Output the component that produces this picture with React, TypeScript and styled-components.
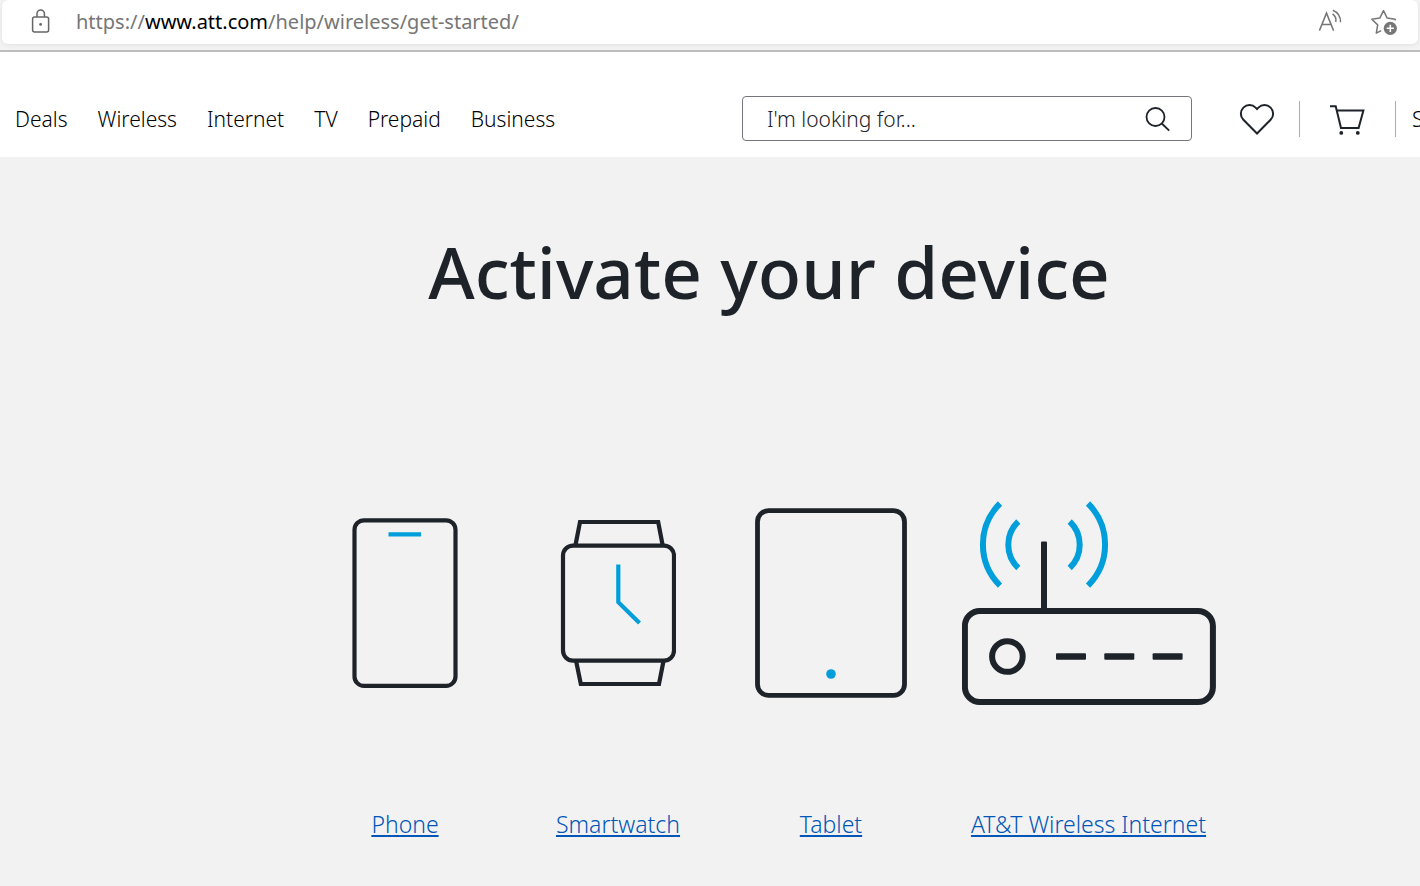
import React from "react";
import styled, { createGlobalStyle } from "styled-components";

const INK = "#1d2329";
const BLUE = "#009fdb";
const LINK = "#0057b8";

const GlobalStyle = createGlobalStyle`
  *, *::before, *::after { box-sizing: border-box; }
  body {
    margin: 0;
    background: #f2f2f2;
    color: ${INK};
    font-family: "Noto Sans", "Open Sans", sans-serif;
  }
`;

const Page = styled.div`
  display: flex;
  flex-direction: column;
  min-height: 100vh;
  overflow-x: hidden;
`;

const BrowserBar = styled.div`
  height: 52px;
  padding: 0 2px;
  background: #f3f3f3;
  border-bottom: 2px solid #bdbdbd;
`;

const AddressBar = styled.div`
  display: flex;
  align-items: center;
  height: 44px;
  padding: 0 20px 0 28px;
  border-radius: 6px;
  background: #fff;
  box-shadow: 0 1px 4px rgba(0, 0, 0, 0.08);
`;

const Url = styled.div`
  flex: 1;
  margin-left: 24px;
  color: #767676;
  font-size: 20px;
  line-height: 28px;
  white-space: nowrap;
`;

const Host = styled.span`
  color: #000;
`;

const IconButton = styled.button`
  display: flex;
  flex: none;
  padding: 0;
  border: 0;
  background: none;
  color: inherit;
  cursor: pointer;
`;

const BarActions = styled.div`
  display: flex;
  gap: 26px;
`;

const SiteHeader = styled.header`
  display: flex;
  align-items: center;
  height: 105px;
  padding: 28px 0 0 15px;
  background: #fff;
`;

const NavList = styled.nav`
  display: flex;
  gap: 30px;
`;

const NavLink = styled.a`
  color: #000;
  font-size: 21px;
  font-weight: 300;
  line-height: 28px;
  text-decoration: none;
  white-space: nowrap;
`;

const SearchForm = styled.form`
  display: flex;
  align-items: center;
  width: 450px;
  height: 45px;
  margin-left: auto;
  padding: 0 19px 0 24px;
  border: 1px solid #74767b;
  border-radius: 4px;
`;

const SearchInput = styled.input`
  flex: 1;
  min-width: 0;
  padding: 0;
  border: 0;
  outline: 0;
  background: none;
  color: ${INK};
  font: 300 21px/28px "Noto Sans", "Open Sans", sans-serif;

  &::placeholder {
    color: ${INK};
    opacity: 1;
  }
`;

const Tools = styled.div`
  display: flex;
  align-items: center;
  flex: none;
  padding-left: 47px;
`;

const Divider = styled.span`
  width: 1px;
  height: 36px;
  margin: 0 30px 0 24px;
  background: #a9abae;
`;

const AccountLink = styled(NavLink)`
  width: 25px;
  height: 36px;
  margin-left: 29px;
  padding-left: 16px;
  border-left: 1px solid #a9abae;
  line-height: 36px;
  overflow: hidden;
`;

const Main = styled.main`
  display: flex;
  flex: 1;
  flex-direction: column;
  align-items: center;
  padding: 66px 0 32px 118px;
`;

const Title = styled.h1`
  margin: 0;
  font-size: 71px;
  font-weight: 500;
  line-height: 98px;
`;

const DeviceGrid = styled.ul`
  display: grid;
  grid-template-columns: 213fr 213fr 213fr 302fr;
  width: 100%;
  max-width: 941px;
  margin: 0;
  padding: 180px 0 0;
  list-style: none;
`;

const Device = styled.li`
  display: flex;
  flex-direction: column;
  align-items: center;
`;

const Figure = styled.div`
  display: flex;
  align-items: center;
  justify-content: center;
  height: 204px;
  margin-bottom: 103px;
`;

const DeviceLink = styled.a`
  color: ${LINK};
  font-size: 23px;
  font-weight: 300;
  line-height: 32px;
  text-decoration-line: underline;
  text-decoration-thickness: 2px;
  text-underline-offset: 2px;
  white-space: nowrap;
`;

const LockIcon = () => (
  <svg width="22" height="26" viewBox="0 0 22 26" fill="none" stroke="#666" strokeWidth="1.5" aria-hidden="true">
    <rect x="2.6" y="7.9" width="16" height="15" rx="2" />
    <path d="M7 7.7V4.6a3.7 3.7 0 0 1 7.4 0v3.1" />
    <circle cx="10.6" cy="15.4" r="1.4" fill="#666" stroke="none" />
  </svg>
);

const ReadAloudIcon = () => (
  <svg width="28" height="28" viewBox="0 0 28 28" fill="none" stroke="#767676" strokeWidth="1.5" aria-hidden="true">
    <path d="M3.4 22.6 10.5 5.1 17.6 22.6M6 16.6h9" />
    <path d="M16.5 5.9a8 8 0 0 1 3.3 8.1M16.8 2.2a12 12 0 0 1 7.7 12" />
  </svg>
);

const StarIcon = () => (
  <svg width="28" height="28" viewBox="0 0 28 28" fill="none" stroke="#767676" strokeWidth="1.5" strokeLinejoin="round" aria-hidden="true">
    <path d="M25.2 12.4v-1.2l-8-1.1-3.7-7.5-3.7 7.5-8 1.1 5.9 5.7-1.4 8.2 4.9-2.5" />
    <circle cx="20.3" cy="20.3" r="6.6" fill="#767676" stroke="none" />
    <path d="M20.3 16.7v7.2M16.7 20.3h7.2" stroke="#fff" strokeWidth="1.6" />
  </svg>
);

const SearchIcon = () => (
  <svg width="28" height="28" viewBox="0 0 28 28" fill="none" stroke={INK} strokeWidth="1.8" aria-hidden="true">
    <circle cx="11.5" cy="12" r="9" />
    <path d="m17.8 18.5 7.4 7.2" />
  </svg>
);

const HeartIcon = () => (
  <svg width="36" height="36" viewBox="0 0 36 36" fill="none" stroke={INK} strokeWidth="2" aria-hidden="true">
    <path d="M18 32.5 4.4 18.8a8.6 8.6 0 0 1 0-12.2 8.6 8.6 0 0 1 12.2 0L18 8l1.4-1.4a8.6 8.6 0 0 1 12.2 0 8.6 8.6 0 0 1 0 12.2Z" />
  </svg>
);

const CartIcon = () => (
  <svg width="36" height="36" viewBox="0 0 36 36" fill="none" stroke={INK} strokeWidth="2" aria-hidden="true">
    <path d="M0 5.2h5.7L11 26.9h17.6l4.8-17.4H6.8" />
    <circle cx="11.3" cy="31.9" r="1.9" fill={INK} stroke="none" />
    <circle cx="27.8" cy="31.9" r="1.9" fill={INK} stroke="none" />
  </svg>
);

const PhoneArt = () => (
  <svg width="106" height="170" viewBox="0 0 106 170" fill="none" stroke={INK} strokeWidth="4.2" aria-hidden="true">
    <rect x="2.5" y="2.3" width="101" height="165.6" rx="9.5" />
    <path d="M36.5 16.3h32.5" stroke={BLUE} />
  </svg>
);

const WatchArt = () => (
  <svg width="116" height="168" viewBox="0 0 116 168" fill="none" stroke={INK} strokeWidth="4.2" aria-hidden="true">
    <rect x="3" y="26.6" width="111" height="115" rx="10" />
    <path d="M15.5 26 20 3h78.2l4.4 23M16 141.5l4.8 23.5h78.2l4.6-23.5" />
    <path d="M58.3 45.6v37.6l21.2 20.7" stroke={BLUE} />
  </svg>
);

const TabletArt = () => (
  <svg width="152" height="190" viewBox="0 0 152 190" fill="none" stroke={INK} strokeWidth="4.8" aria-hidden="true">
    <rect x="2.5" y="2.7" width="147" height="184.6" rx="11" />
    <circle cx="76" cy="166" r="4.8" fill={BLUE} stroke="none" />
  </svg>
);

const RouterArt = () => (
  <svg width="254" height="204" viewBox="0 0 254 204" fill="none" stroke={INK} strokeWidth="6" aria-hidden="true">
    <rect x="2.9" y="110" width="248" height="91" rx="15" />
    <circle cx="45.4" cy="155.5" r="15.3" />
    <path d="M82 43.5V110" strokeLinejoin="round" />
    <rect x="79" y="40.5" width="6" height="10" rx="1" fill={INK} stroke="none" />
    <g fill={INK} stroke="none">
      <rect x="94" y="152.3" width="30" height="6.4" rx="1" />
      <rect x="142.3" y="152.3" width="30" height="6.4" rx="1" />
      <rect x="190.6" y="152.3" width="30" height="6.4" rx="1" />
    </g>
    <path
      d="M38 2.5a58 58 0 0 0 0 82.2M56.3 20.5a32 32 0 0 0 0 46.5M107.7 20.5a32 32 0 0 1 0 46.5M126 2.5a58 58 0 0 1 0 82.2"
      stroke={BLUE}
    />
  </svg>
);

const navItems = ["Deals", "Wireless", "Internet", "TV", "Prepaid", "Business"];

const devices = [
  { label: "Phone", Art: PhoneArt },
  { label: "Smartwatch", Art: WatchArt },
  { label: "Tablet", Art: TabletArt },
  { label: "AT&T Wireless Internet", Art: RouterArt },
];

export default function App() {
  return (
    <Page>
      <GlobalStyle />
      <BrowserBar>
        <AddressBar>
          <LockIcon />
          <Url>
            https://<Host>www.att.com</Host>/help/wireless/get-started/
          </Url>
          <BarActions>
            <IconButton type="button" aria-label="Read aloud"><ReadAloudIcon /></IconButton>
            <IconButton type="button" aria-label="Add to favorites"><StarIcon /></IconButton>
          </BarActions>
        </AddressBar>
      </BrowserBar>
      <SiteHeader>
        <NavList>
          {navItems.map((item) => (
            <NavLink key={item} href="#">{item}</NavLink>
          ))}
        </NavList>
        <SearchForm role="search">
          <SearchInput type="text" aria-label="Search" placeholder="I'm looking for..." />
          <IconButton type="button" aria-label="Submit search"><SearchIcon /></IconButton>
        </SearchForm>
        <Tools>
          <IconButton type="button" aria-label="Favorites"><HeartIcon /></IconButton>
          <Divider />
          <IconButton type="button" aria-label="Cart"><CartIcon /></IconButton>
          <AccountLink href="#">S</AccountLink>
        </Tools>
      </SiteHeader>
      <Main>
        <Title>Activate your device</Title>
        <DeviceGrid>
          {devices.map(({ label, Art }) => (
            <Device key={label}>
              <Figure><Art /></Figure>
              <DeviceLink href="#">{label}</DeviceLink>
            </Device>
          ))}
        </DeviceGrid>
      </Main>
    </Page>
  );
}
